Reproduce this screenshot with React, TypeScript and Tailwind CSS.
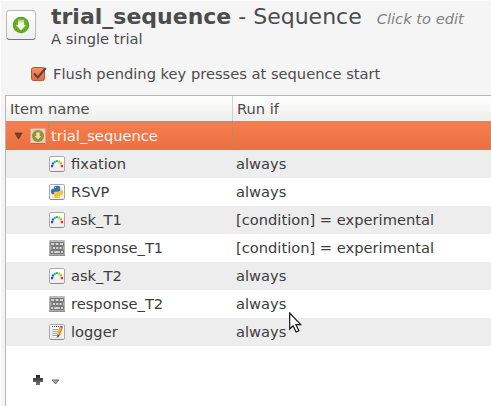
import type { ReactNode } from "react";

function Tile({ children }: { children: ReactNode }) {
  return (
    <svg width="16" height="16" viewBox="0 0 16 16" className="shrink-0">
      <defs>
        <linearGradient id="tile" x1="0" y1="0" x2="0" y2="1">
          <stop offset="0" stopColor="#ffffff" />
          <stop offset="1" stopColor="#ececec" />
        </linearGradient>
      </defs>
      <rect x="0.5" y="0.5" width="15" height="15" rx="1.3" fill="url(#tile)" stroke="#a8a8a8" />
      <path d="M1.5 15.5h13" stroke="#8c8c8c" />
      {children}
    </svg>
  );
}

function SketchIcon() {
  return (
    <Tile>
      <rect x="2" y="9" width="2.2" height="2.2" fill="#5b2bb8" />
      <rect x="2.8" y="6.4" width="2.4" height="2.2" fill="#2466e0" />
      <rect x="4.8" y="4.7" width="2.1" height="2.1" fill="#25b4d4" />
      <rect x="7" y="4" width="2" height="2.2" fill="#37c84a" />
      <rect x="9.1" y="4.7" width="2.1" height="2.1" fill="#8fd42c" />
      <rect x="10.8" y="6.4" width="2.4" height="2.2" fill="#ff9a21" />
      <rect x="11.8" y="9" width="2.2" height="2.2" fill="#ed254c" />
    </Tile>
  );
}

function PythonIcon() {
  return (
    <Tile>
      <path d="M4.9 4.8V3.2Q5 1.8 8 1.8t3.2 1.4V6q0 1.8-1.8 1.8H6.5Q4.9 7.8 4.8 10.2H3.5Q1.8 9.9 1.8 7.5T3.8 4.8H8" fill="#3973a5" />
      <path d="M11.1 11.2v1.6Q11 14.2 8 14.2t-3.2-1.4V10q0-1.8 1.8-1.8h2.9Q11.1 8.2 11.2 5.8h1.3Q14.2 6.1 14.2 8.5T12.2 11.2H8" fill="#f8c33c" />
      <circle cx="6.5" cy="3.5" r="0.6" fill="#fff" />
      <circle cx="9.5" cy="12.5" r="0.6" fill="#fff" />
    </Tile>
  );
}

function KeyboardIcon() {
  return (
    <svg width="16" height="16" viewBox="0 0 16 16" className="shrink-0">
      <defs>
        <linearGradient id="keys" x1="0" y1="0" x2="0" y2="1">
          <stop stopColor="#bdbdbd" />
          <stop offset="1" stopColor="#a9a9a9" />
        </linearGradient>
      </defs>
      <rect width="16" height="16" rx="1" fill="url(#keys)" />
      <path d="M0 15.5h16" stroke="#8f8f8f" />
      <path d="M1 2h14v4l-1 .5v3l1 .5v4H1v-4l1.5-.5v-3L1 6z" fill="#7a7a7a" />
      <g fill="#d4d4d4">
        <rect x="2" y="3" width="3" height="2" />
        <rect x="6.5" y="3" width="3" height="2" />
        <rect x="11" y="3" width="3" height="2" />
        <rect x="4" y="7" width="2" height="2" />
        <rect x="7.2" y="7" width="2" height="2" />
        <rect x="10.5" y="7" width="2" height="2" />
        <rect x="2" y="11" width="2" height="2" />
        <rect x="5.2" y="11" width="5.6" height="2" />
        <rect x="12" y="11" width="2" height="2" />
      </g>
    </svg>
  );
}

function LoggerIcon() {
  return (
    <Tile>
      <path d="M3 2.5h9.5V13.5H3z" fill="#fbfbfb" stroke="#d2d2d2" strokeWidth="0.5" />
      <path d="M3 2.5h10" stroke="#555" strokeDasharray="1 1" />
      <path d="M3.5 5.5h6M3.5 7.5h5.5M3.5 9.5h5M3.5 11.5h4.5" stroke="#8e9dc0" strokeWidth="1" />
      <path d="M12 3.8L9.6 11" stroke="#e0801a" strokeWidth="3" />
      <path d="M11.6 3.8L9.1 11" stroke="#ffc040" strokeWidth="1.1" />
      <path d="M10.7 3.3l2.7 1 .5-1.8-2.3-1z" fill="#e4452d" />
      <path d="M8.3 10.6l2.6.9-2.6 2.4z" fill="#5c4122" />
    </Tile>
  );
}

function SequenceIcon({ large = false }: { large?: boolean }) {
  return large ? (
    <svg width="30" height="31" viewBox="0 0 30 31" className="shrink-0">
      <defs>
        <linearGradient id="big" x1="0" y1="0" x2="0" y2="1">
          <stop stopColor="#ffffff" />
          <stop offset="1" stopColor="#eeeeee" />
        </linearGradient>
        <radialGradient id="green">
          <stop stopColor="#7cc82a" />
          <stop offset="0.7" stopColor="#66b01f" />
          <stop offset="1" stopColor="#559f1c" />
        </radialGradient>
        <linearGradient id="arrow" x1="0" y1="0" x2="0" y2="1">
          <stop stopColor="#fff" stopOpacity="0.3" />
          <stop offset="0.45" stopColor="#fff" />
        </linearGradient>
      </defs>
      <rect x="0.5" y="0.5" width="29" height="29" rx="2.5" fill="url(#big)" stroke="#b9b9b9" />
      <path d="M1 28q.5 1.5 2 1.5h24q1.5 0 2-1.5" fill="none" stroke="#777" />
      <circle cx="15" cy="15" r="8.2" fill="url(#green)" />
      <path d="M12 9.5h6V15h2l-5 5.2L10 15h2z" fill="url(#arrow)" />
    </svg>
  ) : (
    <svg width="16" height="16" viewBox="0 0 16 16" className="shrink-0">
      <rect x="0.5" y="0.5" width="15" height="15" rx="1" fill="#f1c9b5" stroke="#dba88d" />
      <path d="M1 15.5h14" stroke="#b66b49" />
      <circle cx="8" cy="8" r="6" fill="#8e982c" />
      <path d="M6.3 4.5h3.4V8h1.6L8 11.6 4.7 8h1.6z" fill="#f4dcc6" />
    </svg>
  );
}

const rows = [
  { name: "fixation", run: "always", icon: SketchIcon },
  { name: "RSVP", run: "always", icon: PythonIcon },
  { name: "ask_T1", run: "[condition] = experimental", icon: SketchIcon },
  { name: "response_T1", run: "[condition] = experimental", icon: KeyboardIcon },
  { name: "ask_T2", run: "always", icon: SketchIcon },
  { name: "response_T2", run: "always", icon: KeyboardIcon },
  { name: "logger", run: "always", icon: LoggerIcon },
];

export default function App() {
  return (
    <main className="relative flex h-[406px] w-[491px] flex-col overflow-hidden border-l border-t border-[#fefefe] bg-[#f5f5f5] font-['DejaVu_Sans',sans-serif] text-[14.667px] leading-[18px] text-[#4c4c4c]">
      <header className="flex h-[60px] shrink-0 pl-[5px] pt-[9px]">
        <SequenceIcon large />
        <div className="-mt-[7px] ml-[15px] whitespace-nowrap">
          <h1 className="flex h-[27px] items-baseline text-[22px] leading-[27px]">
            <span className="font-bold">trial_sequence</span>
            <span className="whitespace-pre"> - Sequence</span>
            <span className="ml-[15px] text-[14.667px] italic text-[#808080]">Click to edit</span>
          </h1>
          <p>A single trial</p>
        </div>
      </header>
      <div className="flex h-[34px] shrink-0 items-start gap-[6px] pl-[29px] pt-[4px]">
        <svg width="17" height="16" viewBox="0 0 17 16" className="mt-[1px]">
          <defs>
            <linearGradient id="check" x1="0" y1="0" x2="0" y2="1">
              <stop stopColor="#f89166" />
              <stop offset="1" stopColor="#e96b3c" />
            </linearGradient>
          </defs>
          <rect x="1.5" y="1.5" width="13" height="13" rx="2" fill="url(#check)" stroke="#b85736" />
          <path d="M4 7.5l3.8 4L15.8 2" fill="none" stroke="#5c4438" strokeWidth="2.1" />
        </svg>
        <span className="whitespace-nowrap">Flush pending key presses at sequence start</span>
      </div>
      <section className="ml-[4px] grow border-l border-t border-[#b9b6b3] bg-white">
        <div className="flex h-[25px] bg-linear-to-b from-white to-[#eeeeec]">
          <div className="w-[227px] border-r border-[#d5d0cd] pl-[4px] pt-[4px]">Item name</div>
          <div className="pl-[4px] pt-[4px]">Run if</div>
        </div>
        <div className="h-px bg-[#9e9995]" />
        <div className="flex h-[28px] bg-linear-to-b from-[#f57e50] to-[#ea703f] text-[#fff4ed]">
          <div className="flex w-[42px] items-center gap-[7px] pl-[8px]">
            <svg width="9" height="8" viewBox="0 0 9 8" className="shrink-0">
              <path d="M0.8 1h7.4L4.5 7z" fill="#6f4030" stroke="#633626" strokeWidth="0.7" />
            </svg>
            <SequenceIcon />
          </div>
          <div className="w-[185px] border border-dotted border-[#a58c7d] pl-[2px] pt-[4px]">trial_sequence</div>
        </div>
        {rows.map(({ name, run, icon: Icon }, index) => (
          <div key={name} className={`flex h-[28px] items-center whitespace-nowrap text-[#3c3c3c] ${index % 2 === 0 ? "bg-[#ededed]" : "bg-white"}`}>
            <div className="flex w-[230px] items-center gap-[6px] pl-[43px]"><Icon />{name}</div>
            <span>{run}</span>
          </div>
        ))}
        <div className="flex items-center gap-[8px] pl-[27px] pt-[29px]">
          <svg width="10" height="10" viewBox="0 0 10 10">
            <defs>
              <linearGradient id="plus" x1="0" y1="0" x2="0" y2="1">
                <stop stopColor="#222" />
                <stop offset="1" stopColor="#777" />
              </linearGradient>
            </defs>
            <path d="M3 0h4v3h3v4H7v3H3V7H0V3h3z" fill="url(#plus)" />
          </svg>
          <svg width="9" height="6" viewBox="0 0 9 6" className="mt-[3px]">
            <path d="M1 1h7L4.5 5z" fill="#a8a8a8" stroke="#6e6e6e" />
          </svg>
        </div>
      </section>
      <svg width="14" height="22" viewBox="0 0 14 22" className="absolute left-[288px] top-[311px]">
        <path d="M0.7 1v16l3.4-3.2 3 6.2 2.8-1.3-3-6h4.8z" fill="#fff" stroke="#151515" strokeWidth="1.2" />
      </svg>
    </main>
  );
}
